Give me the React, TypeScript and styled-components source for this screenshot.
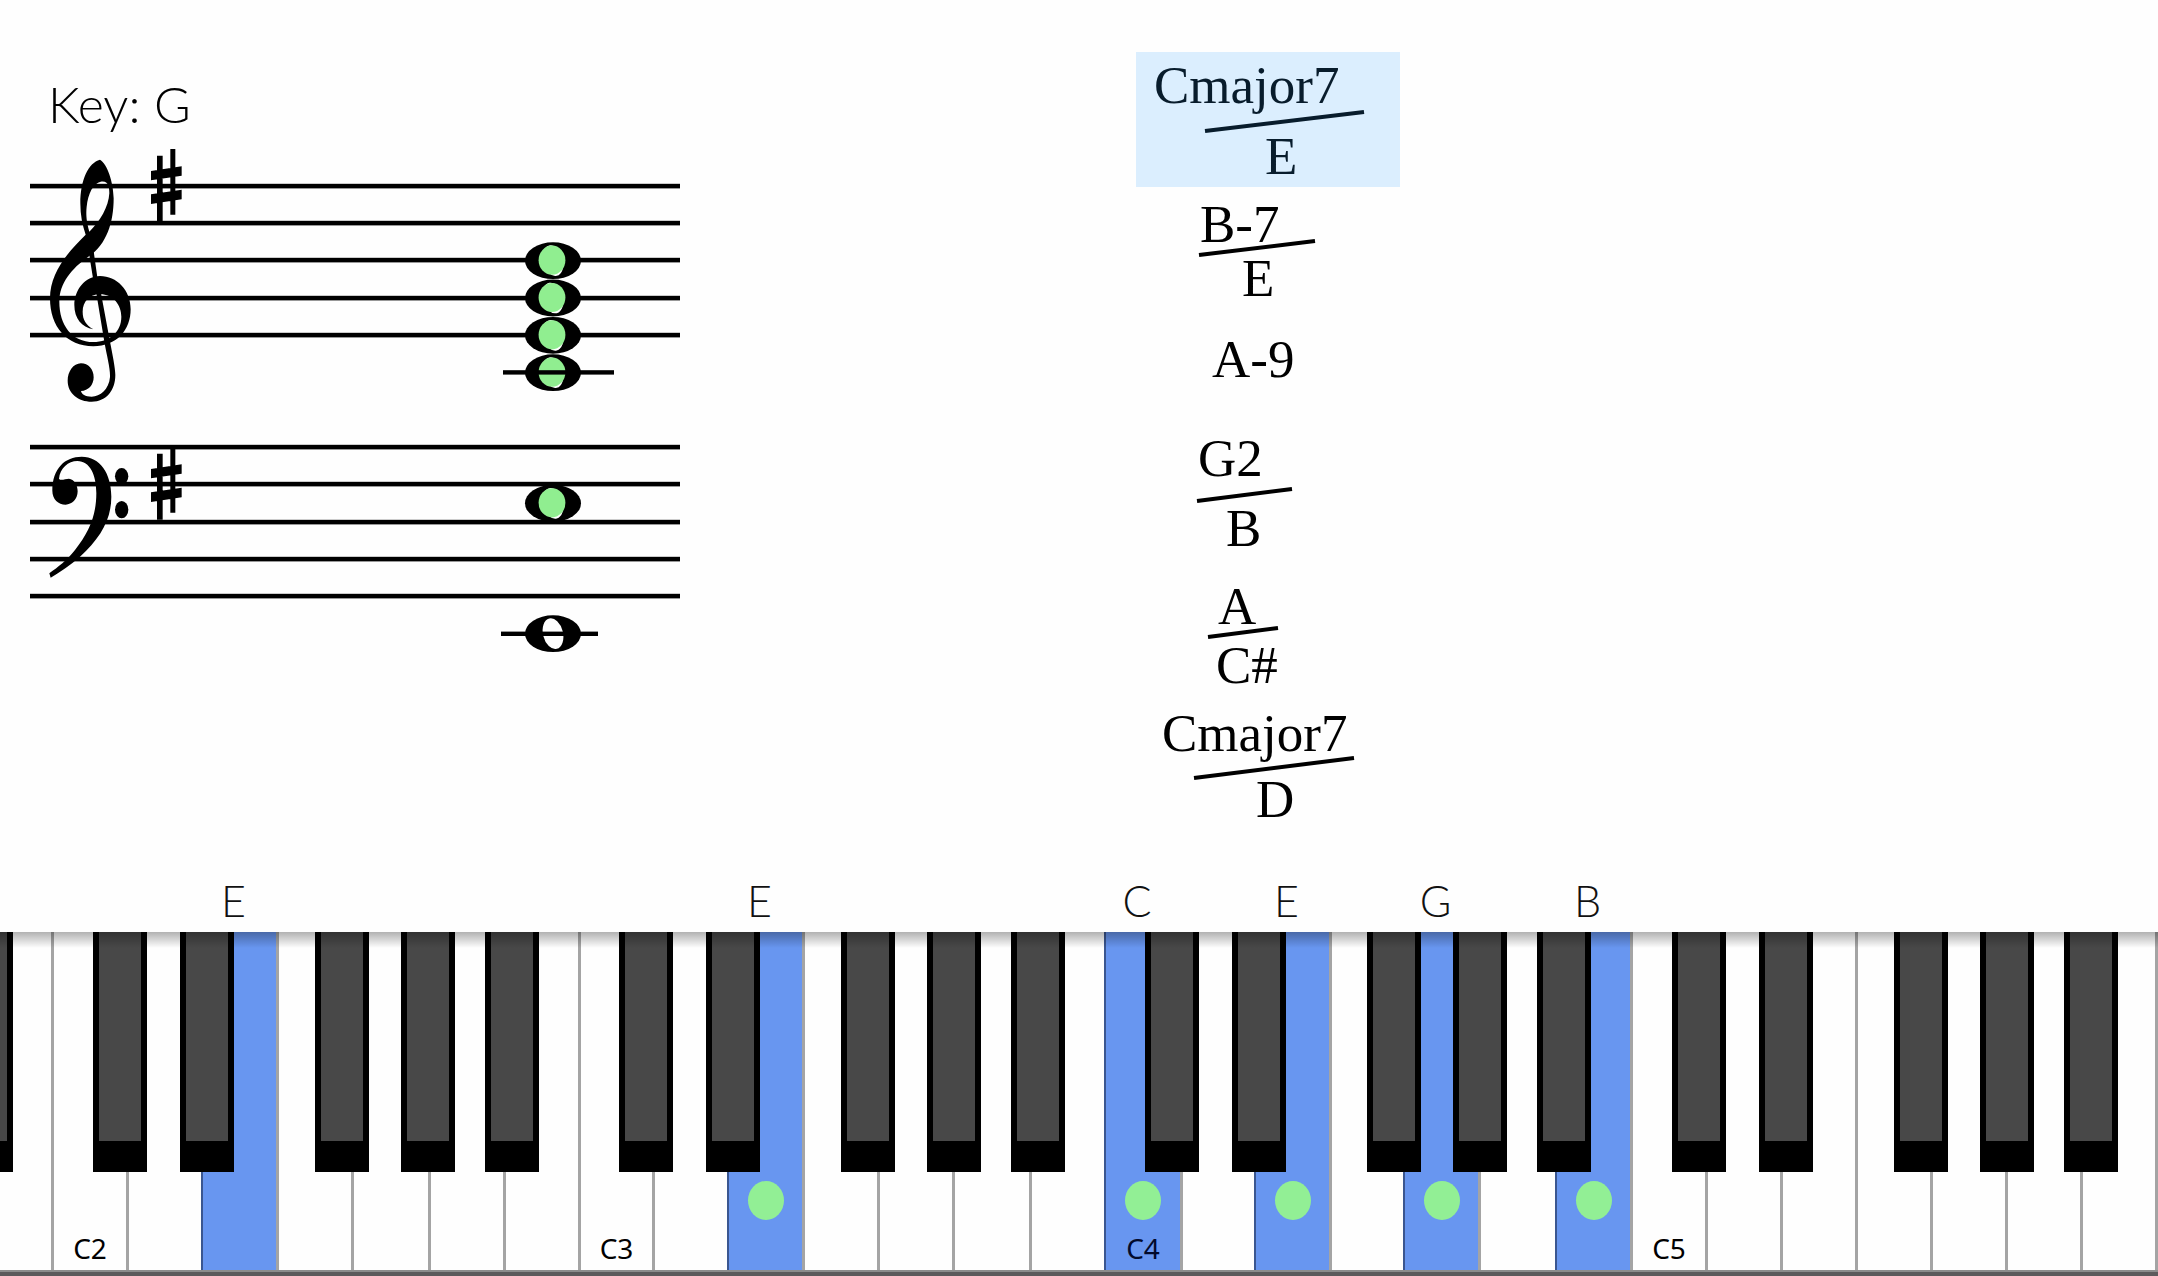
import React from "react";
import styled, { createGlobalStyle } from "styled-components";

const GlobalStyle = createGlobalStyle`
  * { box-sizing: border-box; }
  body { margin: 0; background: #fefefe; }
  button { appearance: none; border: 0; margin: 0; color: inherit; text-align: left; cursor: pointer; }
`;

const Page = styled.div`
  display: flex;
  flex-direction: column;
  min-height: 100vh;
  overflow: hidden;
  background: #fefefe;
  color: #000;
`;

const Lesson = styled.main`
  flex: 1;
  display: grid;
  grid-template-columns: 1136fr 1022fr;
  align-items: start;
`;

const Score = styled.section`
  display: flex;
  flex-direction: column;
  padding: 72px 0 0 28px;
`;

const KeyName = styled.h1`
  margin: 0;
  padding-left: 20px;
  font: 300 50px/64px Lato, "Open Sans", sans-serif;
  color: #000;
`;

const StaffDrawing = styled.svg`
  display: block;
  width: 656px;
  height: 524px;
`;

const ChordList = styled.ol`
  display: flex;
  flex-direction: column;
  width: 264px;
  margin: 0;
  padding: 52px 0 0;
  list-style: none;
`;

const ChordItem = styled.li<{ $space: number }>`
  padding-top: ${(p) => p.$space}px;
`;

const ChordButton = styled.button<{ $current?: boolean }>`
  display: flex;
  flex-direction: column;
  width: 100%;
  padding: 13px 0 11px;
  background: ${(p) => (p.$current ? "#dbeefe" : "transparent")};
  color: ${(p) => (p.$current ? "#081c2c" : "#000")};
  font: 53px/40px "Liberation Serif", "Times New Roman", serif;
`;

const ChordPart = styled.span<{ $indent: number }>`
  padding-left: ${(p) => p.$indent}px;
  white-space: nowrap;
`;

const SlashLine = styled.svg`
  display: block;
  width: 100%;
  overflow: visible;
`;

const NoteNames = styled.div`
  display: flex;
  height: 60px;
`;

const NoteName = styled.span<{ $span: number }>`
  flex: ${(p) => `${p.$span} 1 ${p.$span}px`};
  min-width: 0;
  padding-right: 10px;
  text-align: center;
  font: 300 43px/58px Lato, "Open Sans", sans-serif;
  color: #111;
  &:last-child { padding-right: 0; }
`;

const Keyboard = styled.section`
  position: relative;
  height: 344px;
  overflow: hidden;
  border-bottom: 4px solid #5c5a5c;
`;

const WhiteKeys = styled.div`
  display: flex;
  height: 100%;
  border-bottom: 2px solid #8c8c8c;
`;

const WhiteKey = styled.button<{ $span: number; $played?: boolean }>`
  flex: ${(p) => `${p.$span} 1 ${p.$span}px`};
  min-width: 0;
  display: flex;
  flex-direction: column;
  align-items: center;
  justify-content: flex-end;
  padding: 0;
  border-left: ${(p) => (p.$played ? "2px solid #3a5690" : "3px solid #a4a4a4")};
  background: ${(p) => (p.$played ? "#6896f0" : "#fefefe")};
  &:first-child { border-left: 0; }
`;

const Finger = styled.span`
  width: 36px;
  height: 39px;
  margin-bottom: 6px;
  border-radius: 50%;
  background: #92ef95;
`;

const OctaveName = styled.span<{ $played?: boolean }>`
  height: 44px;
  font: 28px/44px "Noto Sans", "Open Sans", sans-serif;
  color: ${(p) => (p.$played ? "#020a2c" : "#000")};
`;

const BlackKey = styled.button`
  position: absolute;
  top: 0;
  width: 2.5%;
  height: 240px;
  border: solid #000;
  border-width: 0 6px 31px;
  background: #484848;
  padding: 0;
`;

const TopShade = styled.div`
  position: absolute;
  inset: 0 0 auto;
  height: 16px;
  background: linear-gradient(rgba(0, 0, 0, 0.3), rgba(0, 0, 0, 0));
  pointer-events: none;
`;

type Slash = { x: number; width: number; rise: number; top: number; gap: number };
type Chord = {
  name: string;
  indent: number;
  space: number;
  slash?: Slash;
  bass?: string;
  bassIndent?: number;
};

const chords: Chord[] = [
  { name: "Cmajor7", indent: 18, space: 0, slash: { x: 69, width: 159, rise: 19, top: 7, gap: 31 }, bass: "E", bassIndent: 129 },
  { name: "B-7", indent: 64, space: 4, slash: { x: 63, width: 116, rise: 14, top: -3, gap: 14 }, bass: "E", bassIndent: 106 },
  { name: "A-9", indent: 76, space: 17 },
  { name: "G2", indent: 62, space: 35, slash: { x: 61, width: 95, rise: 12, top: 11, gap: 30 }, bass: "B", bassIndent: 90 },
  { name: "A", indent: 82, space: 14, slash: { x: 72, width: 70, rise: 9, top: 2, gap: 19 }, bass: "C#", bassIndent: 80 },
  { name: "Cmajor7", indent: 26, space: 4, slash: { x: 58, width: 160, rise: 20, top: 5, gap: 26 }, bass: "D", bassIndent: 120 },
];

type Key = { note: string; span: number; played?: boolean; finger?: boolean };

const key = (note: string, span: number, played = false, finger = false): Key => ({ note, span, played, finger });

const whiteKeys: Key[] = [
  key("B1", 51),
  key("C2", 75), key("D2", 75), key("E2", 75, true), key("F2", 75), key("G2", 77), key("A2", 75), key("B2", 75),
  key("C3", 74), key("D3", 75), key("E3", 75, true, true), key("F3", 75), key("G3", 75), key("A3", 77), key("B3", 75),
  key("C4", 76, true, true), key("D4", 74), key("E4", 75, true, true), key("F4", 74), key("G4", 75, true, true), key("A4", 77), key("B4", 75, true, true),
  key("C5", 75), key("D5", 75), key("E5", 75), key("F5", 75), key("G5", 75), key("A5", 75), key("B5", 75),
  key("C6", 3),
];

const total = whiteKeys.reduce((sum, k) => sum + k.span, 0);
const octaveStarts = [53, 579, 1105, 1632];
const blackOffsets = [40, 127, 262, 348, 432];
const blackKeys = [-41, ...octaveStarts.flatMap((start) => blackOffsets.map((offset) => start + offset))];

const TREBLE_LINES = [186, 223, 260, 298, 335];
const BASS_LINES = [447, 484, 522, 559, 596];

function Sharp({ y }: { y: number }) {
  return (
    <path
      transform={`translate(0 ${y}) scale(0.33333)`}
      d="M471 20H488V218H471ZM511 0H526V197H511ZM453 66L545 52V80L453 94ZM453 136L545 122V151L453 165Z"
    />
  );
}

function WholeNote({ y, marked }: { y: number; marked?: boolean }) {
  return (
    <g>
      <ellipse cx="553" cy={y} rx="28" ry="18.4" />
      <ellipse cx="553" cy={y} rx="10" ry="15.6" fill="#fefefe" transform={`rotate(-14 553 ${y})`} />
      {marked && <ellipse cx="552" cy={y - 0.5} rx="13.4" ry="14.6" fill="#90ee90" />}
    </g>
  );
}

function GrandStaff() {
  return (
    <StaffDrawing viewBox="28 136 656 524" role="img" aria-label="Grand staff in G with the current voicing">
      {[...TREBLE_LINES, ...BASS_LINES].map((y) => (
        <rect key={y} x="30" y={y - 2.2} width="650" height="4.6" />
      ))}
      <g transform="translate(0 60) scale(0.33333)">
        <path
          fillRule="evenodd"
          d="M300 299C265 308 241 360 241 430C241 465 247 495 257 524C200 580 150 640 150 715C150 800 200 859 280 859C350 859 392 810 392 748C392 690 350 648 300 648C255 648 223 690 223 735C223 775 245 802 280 808C258 795 248 780 248 755C248 725 268 703 300 703C340 703 364 735 364 770C364 815 330 846 280 846C215 846 178 795 178 725C178 670 215 625 265 590C318 556 341 490 341 415C340 365 322 312 300 299ZM302 365C325 361 328 380 328 400C326 440 300 485 268 515C258 480 258 460 260 440C264 400 280 370 302 365Z"
        />
        <path d="M267 580L281 574L292 652L279 655ZM289 700L303 700L330 845C337 880 346 925 346 945C346 990 320 1025 275 1025C235 1025 203 1000 203 962C203 935 220 910 243 910C265 910 281 928 281 952C281 975 265 993 243 993C245 1003 255 1010 275 1010C300 1010 327 988 330 951C331 925 321 890 313 845Z" />
      </g>
      <g transform="translate(0 420) scale(0.33333)">
        <path d="M157 212C157 145 195 110 245 110C300 110 334 160 334 230C334 300 300 355 240 410C212 436 180 455 152 473L148 460C175 440 200 422 225 390C268 335 289 285 289 220C289 165 270 123 232 123C205 123 180 145 177 176C182 184 196 176 207 176C222 177 233 195 233 214C233 238 215 254 197 254C175 254 157 238 157 212Z" />
        <ellipse cx="365" cy="169" rx="20" ry="25" />
        <ellipse cx="365" cy="269" rx="20" ry="26" />
      </g>
      <Sharp y={149} />
      <Sharp y={447} />
      {[260.7, 298, 335.3, 372.7, 503.3].map((y) => (
        <WholeNote key={y} y={y} marked />
      ))}
      <WholeNote y={633.7} />
      <rect x="503" y="370.2" width="111" height="4.4" />
      <rect x="501" y="631.6" width="97" height="4.4" />
    </StaffDrawing>
  );
}

export default function App() {
  return (
    <Page>
      <GlobalStyle />
      <Lesson>
        <Score>
          <KeyName>Key: G</KeyName>
          <GrandStaff />
        </Score>
        <ChordList>
          {chords.map((chord, i) => (
            <ChordItem key={i} $space={chord.space}>
              <ChordButton type="button" $current={i === 0} aria-current={i === 0}>
                <ChordPart $indent={chord.indent}>{chord.name}</ChordPart>
                {chord.slash && (
                  <SlashLine height={chord.slash.gap} aria-hidden="true">
                    <line
                      x1={chord.slash.x}
                      y1={chord.slash.top + chord.slash.rise}
                      x2={chord.slash.x + chord.slash.width}
                      y2={chord.slash.top}
                      stroke="currentColor"
                      strokeWidth="4"
                    />
                  </SlashLine>
                )}
                {chord.bass && <ChordPart $indent={chord.bassIndent ?? 0}>{chord.bass}</ChordPart>}
              </ChordButton>
            </ChordItem>
          ))}
        </ChordList>
      </Lesson>
      <NoteNames>
        {whiteKeys.map((k) => (
          <NoteName key={k.note} $span={k.span}>{k.played ? k.note[0] : ""}</NoteName>
        ))}
      </NoteNames>
      <Keyboard aria-label="Piano keyboard">
        <WhiteKeys>
          {whiteKeys.map((k) => (
            <WhiteKey key={k.note} type="button" aria-label={k.note} $span={k.span} $played={k.played}>
              {k.finger && <Finger />}
              <OctaveName $played={k.played}>{/^C[2-5]$/.test(k.note) ? k.note : ""}</OctaveName>
            </WhiteKey>
          ))}
        </WhiteKeys>
        {blackKeys.map((x) => (
          <BlackKey key={x} type="button" aria-label="Black key" style={{ left: `${(x / total) * 100}%` }} />
        ))}
        <TopShade />
      </Keyboard>
    </Page>
  );
}
